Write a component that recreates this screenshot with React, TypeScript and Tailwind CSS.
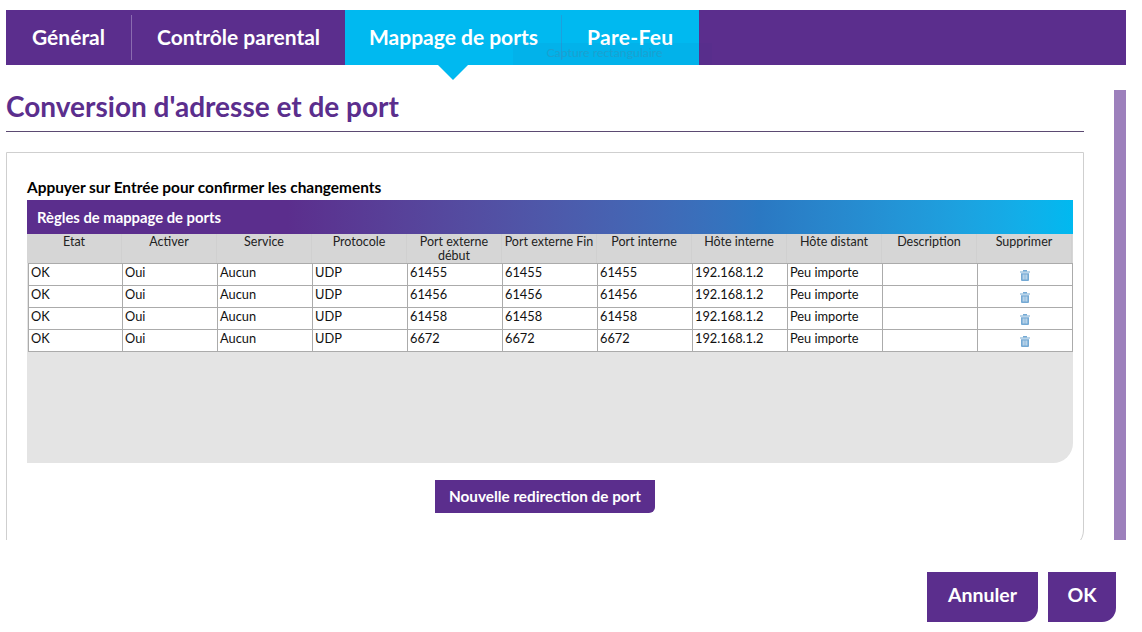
const rows = [
  ["61455", "61455", "61455"],
  ["61456", "61456", "61456"],
  ["61458", "61458", "61458"],
  ["6672", "6672", "6672"],
];
const heads = ["Etat", "Activer", "Service", "Protocole", "Port externe début", "Port externe Fin", "Port interne", "Hôte interne", "Hôte distant", "Description", "Supprimer"];

function Trash() {
  return (
    <svg width="10" height="11" viewBox="0 0 10 11" className="block" fill="none">
      <rect x="0" y="1.5" width="10" height="1" fill="#74a9d4" />
      <rect x="3" y="0" width="4" height="1.5" fill="#74a9d4" />
      <path d="M1 3.2h8v6.8a1 1 0 0 1-1 1h-6a1 1 0 0 1-1-1z" fill="#74a9d4" />
      <path d="M3.2 4.5v5M5 4.5v5M6.8 4.5v5" stroke="#fff" strokeWidth="0.7" />
    </svg>
  );
}

function Tab({ label, w, pad, active }: { label: string; w: string; pad: string; active?: boolean }) {
  return (
    <div className={`${w} ${pad} ${active ? "bg-[#00b9f0]" : ""} flex h-full items-center pb-[2px] text-[21px] font-bold text-white`}>
      <span>{label}</span>
    </div>
  );
}

export default function App() {
  return (
    <div className="relative h-[632px] w-[1142px] overflow-hidden bg-white font-['Lato',sans-serif] text-[#111]">
      <div className="pl-[6px] pt-[10px]">
        <div className="relative flex h-[55px] w-[1120px] items-stretch bg-[#5b2e8d]">
          <Tab label="Général" w="w-[125px]" pad="pl-[26px]" />
          <div className="my-[5px] w-px bg-[#8a6bb0]" />
          <Tab label="Contrôle parental" w="w-[213px]" pad="pl-[25px]" />
          <Tab label="Mappage de ports" w="w-[216px]" pad="pl-[24px]" active />
          <div className="flex w-px bg-[#00b9f0] py-[5px]"><div className="w-px bg-[#1ea0dc]" /></div>
          <Tab label="Pare-Feu" w="w-[137px]" pad="pl-[25px] tracking-[0.3px]" active />
          <div className="absolute left-[432px] top-[55px] h-0 w-0 border-x-[15px] border-t-[15px] border-x-transparent border-t-[#00b9f0]" />
          <div className="absolute left-[507px] top-[33px] flex h-[22px] w-[199px] items-center justify-center bg-[#1f3f8f]/5 pr-[16px] pb-[2px] text-[12.3px] text-[#1ba0d0]">
            Capture rectangulaire
          </div>
        </div>
      </div>

      <div className="flex h-[475px] overflow-hidden pl-[6px]">
        <div className="w-[1078px]">
          <h1 className="mt-[24px] h-[43px] border-b border-[#5b4a72] text-[28px] leading-[34px] font-bold text-[#5b2e8d]">
            Conversion d'adresse et de port
          </h1>
          <div className="mt-[20px] h-[398px] rounded-br-[20px] border border-[#cfcfcf] px-[20px] pt-[26px]">
            <div className="h-[21px] text-[15.4px] leading-[16px] font-bold text-black">
              Appuyer sur Entrée pour confirmer les changements
            </div>
            <div className="h-[263px] w-[1046px] overflow-hidden rounded-br-[20px] bg-[#e4e4e4]">
              <div className="flex h-[34px] items-center bg-gradient-to-r from-[#5b2e8d] from-25% via-[#2b78c2] via-70% to-[#00b9f0] pl-[10px] text-[14.8px] font-bold text-white">
                Règles de mappage de ports
              </div>
              <div className="grid h-[29px] grid-cols-[repeat(11,95px)] bg-[#d6d6d6]">
                {heads.map((h) => (
                  <div key={h} className="border-r border-[#d0d0d0] px-[2px] pt-[1px] text-center text-[12.5px] leading-[13.5px] text-[#222]">
                    {h}
                  </div>
                ))}
              </div>
              <table className="ml-px w-[1045px] table-fixed border-collapse bg-white text-[12.8px] text-[#111]">
                <colgroup>
                  <col className="w-[94px]" />
                </colgroup>
                <tbody>
                  {rows.map((r, i) => (
                    <tr key={i} className="h-[22px]">
                      {["OK", "Oui", "Aucun", "UDP", ...r, "192.168.1.2", "Peu importe"].map((c, j) => (
                        <td key={j} className={`h-[22px] border border-[#ababab] p-0 pb-[6px] pl-[2px] align-middle leading-[14px] ${j === 9 ? "text-[12.3px]" : ""}`}>
                          {c}
                        </td>
                      ))}
                      <td className="border border-[#ababab] p-0" />
                      <td className="border border-[#ababab] p-0">
                        <div className="flex justify-center pt-[1px]"><Trash /></div>
                      </td>
                    </tr>
                  ))}
                </tbody>
              </table>
            </div>
            <div className="mt-[17px] flex justify-center">
              <button className="flex h-[33px] w-[220px] items-center justify-center rounded-br-[6px] bg-[#5b2e8d] text-[15.3px] font-bold text-white">
                Nouvelle redirection de port
              </button>
            </div>
          </div>
        </div>
        <div className="mt-[25px] ml-[30px] w-[12px] bg-[#9d80bc]" />
      </div>

      <div className="flex justify-end gap-[10px] pt-[32px] pr-[26px]">
        <button className="h-[50px] w-[111px] rounded-br-[14px] bg-[#5b2e8d] pb-[4px] text-[19.5px] font-bold text-white">Annuler</button>
        <button className="h-[50px] w-[68px] rounded-br-[14px] bg-[#5b2e8d] pb-[4px] text-[19.5px] font-bold text-white">OK</button>
      </div>
    </div>
  );
}
